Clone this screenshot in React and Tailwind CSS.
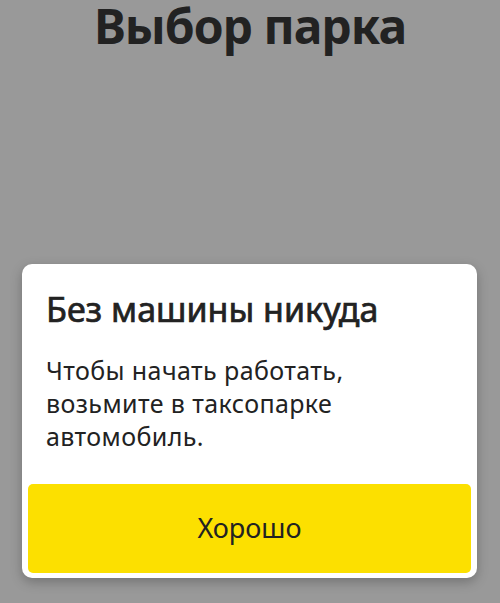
import React from "react";

export default function App() {
  return (
    <div
      className="w-[500px] h-[603px] bg-[#999999] flex flex-col overflow-hidden"
      style={{ fontFamily: '"Noto Sans", "Open Sans", sans-serif' }}
    >
      <h1 className="mt-[2px] text-center text-[48px] leading-[48px] font-bold text-[#222222] tracking-[-1px]">
        Выбор парка
      </h1>
      <div className="mt-auto mb-[25px] ml-[22px] mr-[23px] bg-white rounded-[10px] shadow-[0_4px_12px_rgba(0,0,0,0.25)] flex flex-col">
        <div className="px-[24px] pt-[25px] pb-[31px]">
          <h2 className="text-[34px] leading-[40px] font-normal text-[#222222] tracking-[0px] [-webkit-text-stroke:0.7px_#222222]">
            Без машины никуда
          </h2>
          <p className="mt-[25px] text-[25px] leading-[33px] text-[#222222] tracking-[0.4px]">
            Чтобы начать работать,
            <br />
            возьмите в таксопарке
            <br />
            автомобиль.
          </p>
        </div>
        <div className="px-[6px] pb-[5px]">
          <button className="w-full h-[89px] bg-[#fce000] rounded-[5px] text-[27px] text-[#222222]">
            Хорошо
          </button>
        </div>
      </div>
    </div>
  );
}
